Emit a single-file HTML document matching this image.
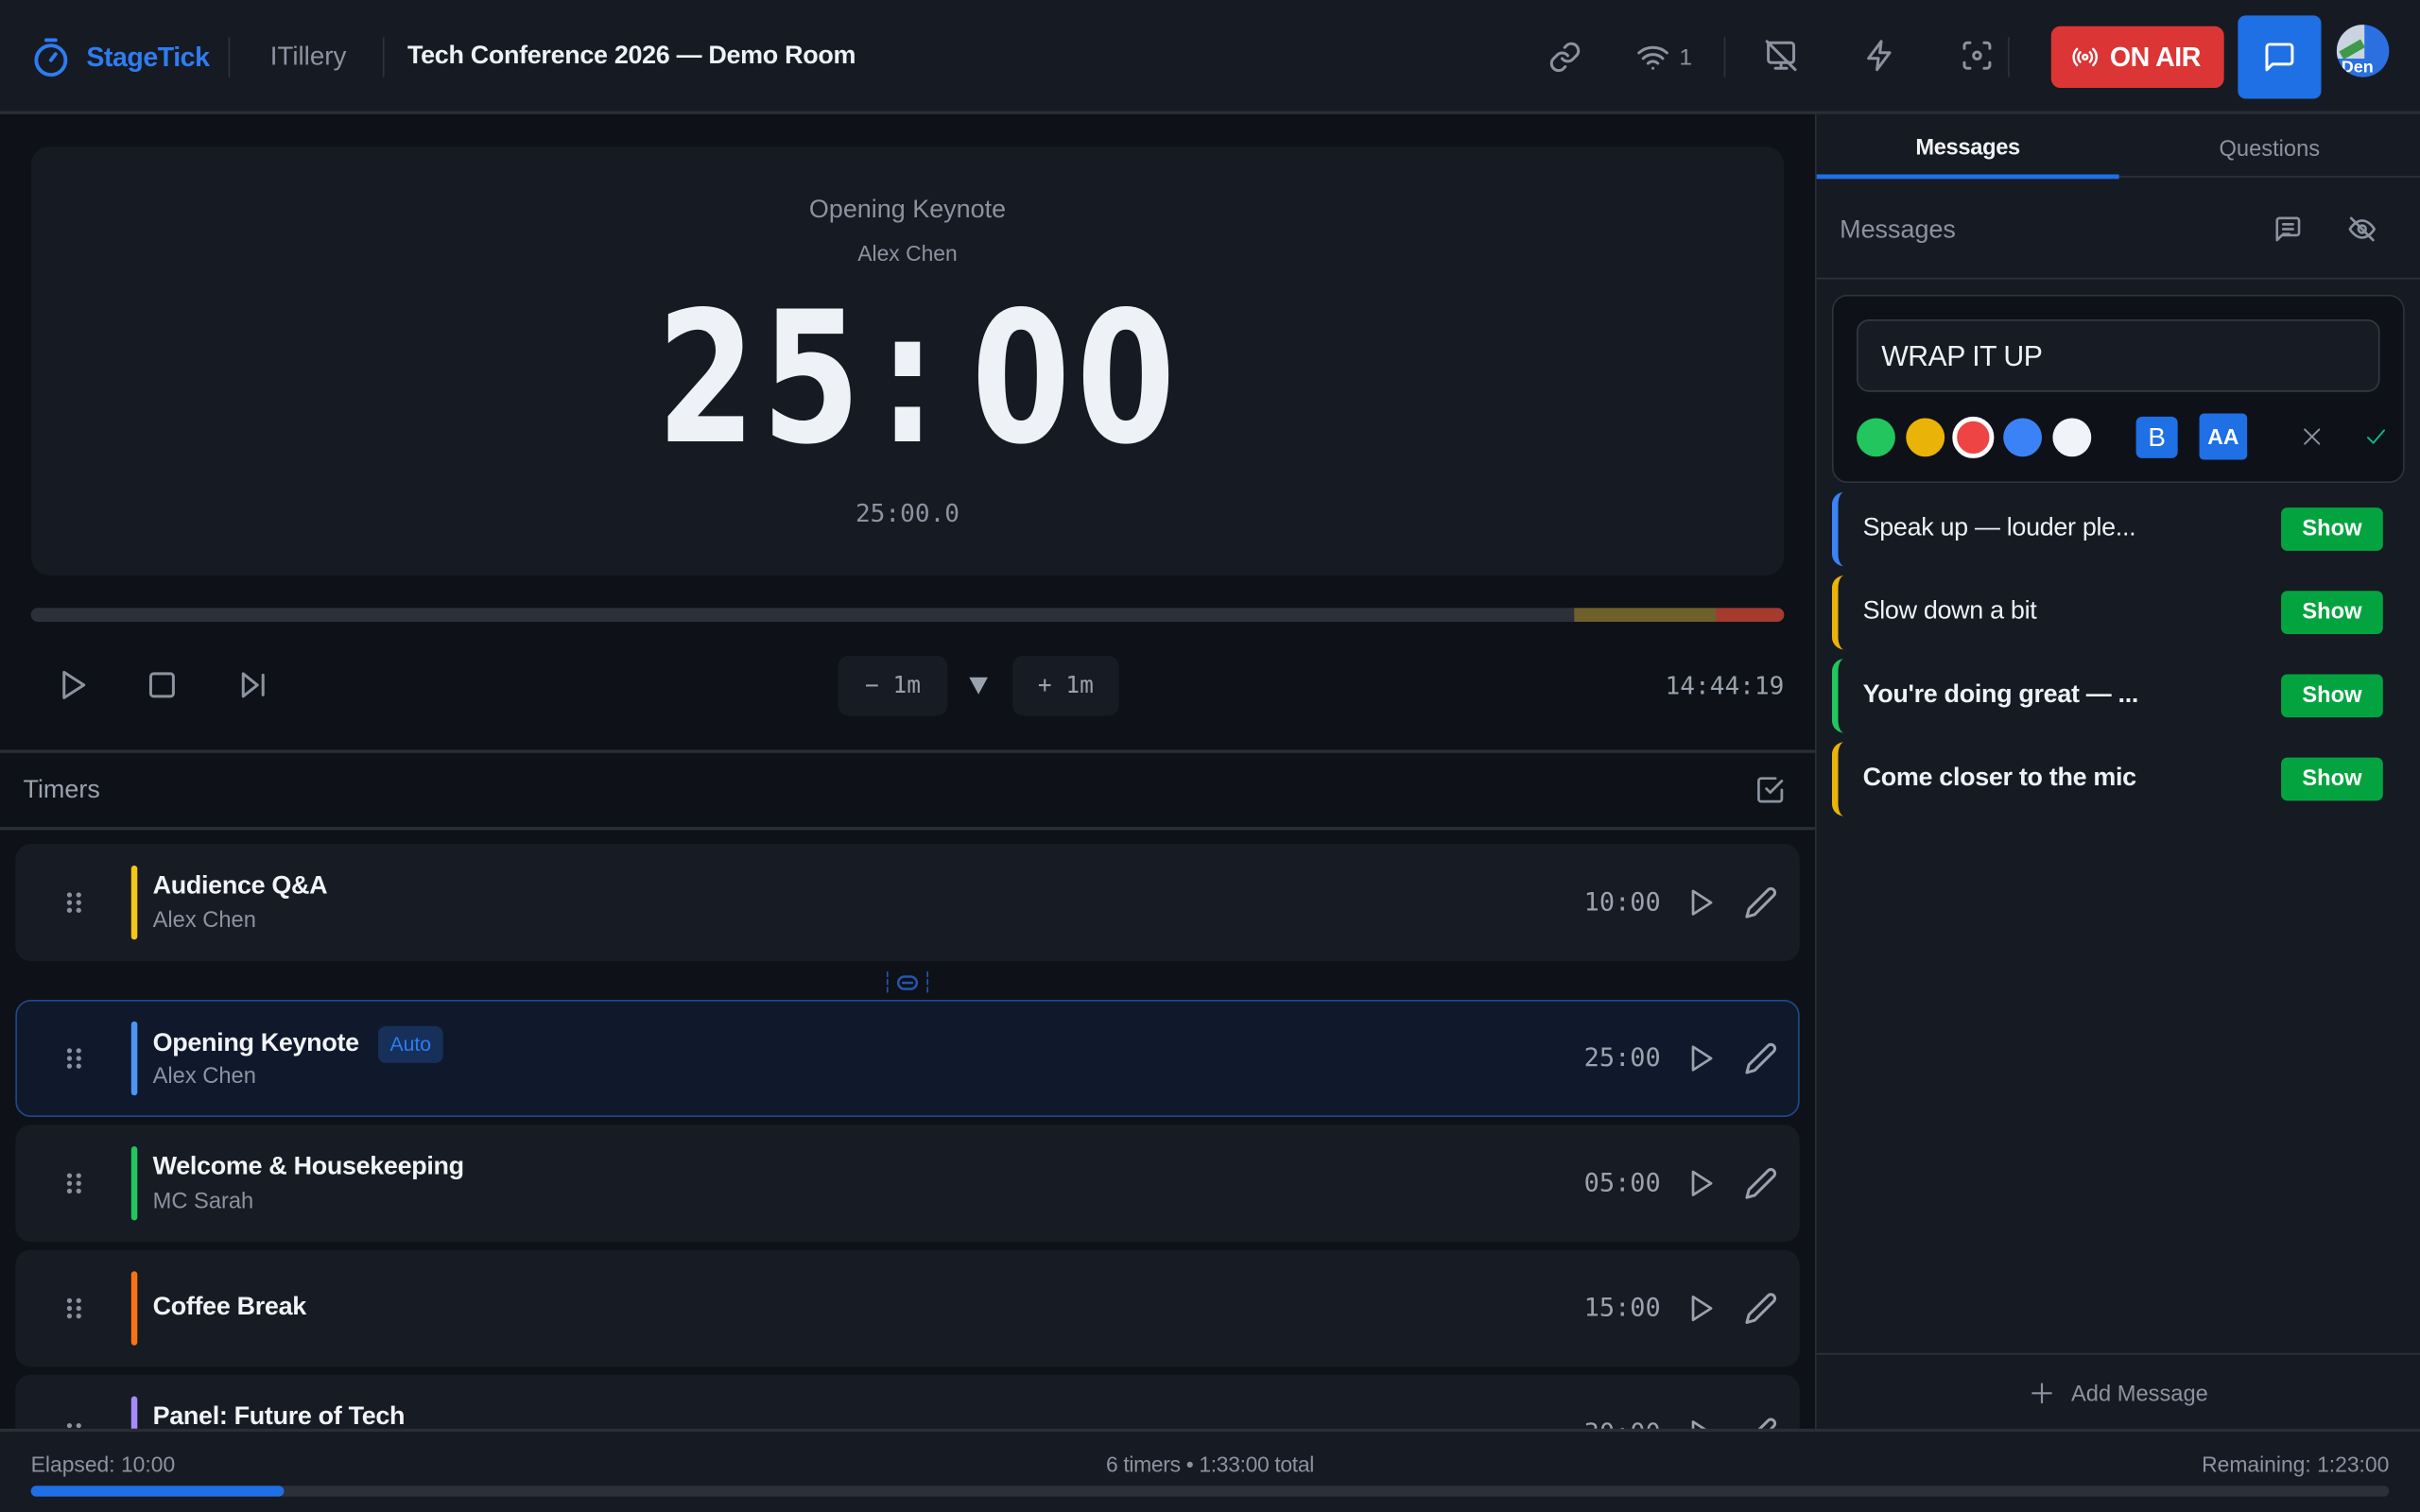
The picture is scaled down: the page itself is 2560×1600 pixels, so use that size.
<!DOCTYPE html>
<html><head><meta charset="utf-8"><style>
*{box-sizing:border-box;margin:0;padding:0}
html,body{width:2560px;height:1600px;overflow:hidden;background:#0e1117}
#w{position:absolute;left:0;top:0;width:1568px;height:980px;transform:scale(1.632653);transform-origin:0 0;font-family:"Liberation Sans",sans-serif;color:#e6e9ef;background:#0e1117}
.a{position:absolute}
svg{fill:none;stroke:currentColor;stroke-width:2;stroke-linecap:round;stroke-linejoin:round}
.mono{font-family:"DejaVu Sans Mono","Liberation Mono",monospace}
.big span{display:inline-block;width:68px;text-align:center;transform:scaleX(0.78)}
.row{position:absolute;left:10px;width:1156px;height:76px;background:#171b23;border-radius:10px}
.row .bar{position:absolute;left:75px;top:14px;width:4px;height:48px;border-radius:2px}
.row .t{position:absolute;left:89px;top:18px;font-size:16.5px;font-weight:bold;color:#f1f3f6;letter-spacing:-0.2px}
.row .s{position:absolute;left:89px;top:42px;font-size:14.5px;color:#8b93a0}
.row .tm{position:absolute;right:90px;top:28px;font-size:16.5px;color:#9aa2ae}
.row .pl{position:absolute;right:54px;top:28px;color:#9aa2ae}
.row .ed{position:absolute;right:14px;top:27px;color:#9aa2ae}
.row .dr{position:absolute;left:32px;top:30px;color:#8b93a0}
.msg{position:absolute;left:1187px;width:370px;height:48px;border-left:4px solid;border-radius:8px 0 0 8px}
.msg .x{position:absolute;left:16px;top:14px;font-size:16.5px;color:#eef1f5;letter-spacing:-0.2px}
.msg .b{position:absolute;right:13px;top:10px;width:66px;height:28px;background:#03a43f;border-radius:4px;color:#fff;font-weight:bold;font-size:14.5px;text-align:center;line-height:28px}
.ic{position:absolute;color:#8b93a0}
</style></head><body><div id="w">
<!-- header -->
<div class="a" style="left:0;top:0;width:1568px;height:74px;background:#161a22;border-bottom:2px solid #2a2e36"></div>
<svg class="a" style="left:21px;top:24px;color:#2f7cf0" width="24" height="26" viewBox="0 0 24 26"><circle cx="12" cy="15" r="9.5" stroke-width="2.4"/><path d="M9 2h6M12 15l3-4" stroke-width="2.4"/></svg>
<div class="a" style="left:56px;top:27px;font-size:17.5px;font-weight:bold;color:#2f7cf0;letter-spacing:-0.3px">StageTick</div>
<div class="a" style="left:148px;top:24px;width:1px;height:26px;background:#2e333c"></div>
<div class="a" style="left:175px;top:27px;font-size:17px;color:#8b93a0">ITillery</div>
<div class="a" style="left:248px;top:24px;width:1px;height:26px;background:#2e333c"></div>
<div class="a" style="left:264px;top:27px;font-size:16.5px;font-weight:bold;color:#eef1f5;letter-spacing:-0.2px">Tech Conference 2026 — Demo Room</div>
<svg class="ic" style="left:1003px;top:26px" width="22" height="22" viewBox="0 0 24 24"><path d="M10 13a5 5 0 0 0 7.5.5l3-3a5 5 0 0 0-7-7l-1.7 1.7"/><path d="M14 11a5 5 0 0 0-7.5-.5l-3 3a5 5 0 0 0 7 7l1.7-1.7"/></svg>
<svg class="ic" style="left:1060px;top:27px" width="22" height="20" viewBox="0 0 24 22"><path d="M2 8a15 15 0 0 1 20 0M5 12a10 10 0 0 1 14 0M8.5 15.5a5 5 0 0 1 7 0M12 19h.01"/></svg>
<div class="a" style="left:1088px;top:29px;font-size:15px;color:#8b93a0">1</div>
<div class="a" style="left:1117px;top:24px;width:1px;height:26px;background:#2e333c"></div>
<svg class="ic" style="left:1143px;top:25px" width="22" height="22" viewBox="0 0 24 24"><path d="M3 3h16a2 2 0 0 1 2 2v10a2 2 0 0 1-2 2H5a2 2 0 0 1-2-2V3zM8 21h8M12 17v4M2 2l20 20"/></svg>
<svg class="ic" style="left:1207px;top:25px" width="22" height="22" viewBox="0 0 24 24"><path d="M13 2L4 14h7l-1 8 9-12h-7l1-8z"/></svg>
<svg class="ic" style="left:1270px;top:25px" width="22" height="22" viewBox="0 0 24 24"><path d="M3 7V5a2 2 0 0 1 2-2h2M17 3h2a2 2 0 0 1 2 2v2M21 17v2a2 2 0 0 1-2 2h-2M7 21H5a2 2 0 0 1-2-2v-2"/><circle cx="12" cy="12" r="2.5"/></svg>
<div class="a" style="left:1301px;top:24px;width:1px;height:26px;background:#2e333c"></div>
<div class="a" style="left:1329px;top:17px;width:112px;height:40px;background:#dc3535;border-radius:6px"></div>
<svg class="a" style="left:1342px;top:28px;color:#fff" width="18" height="18" viewBox="0 0 24 24"><circle cx="12" cy="12" r="2"/><path d="M16.2 7.8a6 6 0 0 1 0 8.4M7.8 16.2a6 6 0 0 1 0-8.4M19 5a10 10 0 0 1 0 14M5 19A10 10 0 0 1 5 5"/></svg>
<div class="a" style="left:1367px;top:27px;font-size:17.5px;font-weight:bold;color:#fff;letter-spacing:-0.3px">ON AIR</div>
<div class="a" style="left:1450px;top:10px;width:54px;height:54px;background:#1f6fe5;border-radius:5px"></div>
<svg class="a" style="left:1466px;top:26px;color:#fff" width="22" height="22" viewBox="0 0 24 24"><path d="M21 15a2 2 0 0 1-2 2H7l-4 4V5a2 2 0 0 1 2-2h14a2 2 0 0 1 2 2z"/></svg>
<div class="a" style="left:1514px;top:16px;width:34px;height:34px;border-radius:50%;background:#2b6fe0;overflow:hidden"><div class="a" style="left:0;top:0;width:18px;height:22px;background:#c9d4e0"></div><div class="a" style="left:2px;top:13px;width:16px;height:6px;background:#3d9a4a;transform:rotate(-30deg)"></div><div class="a" style="left:3px;top:22px;font-size:11px;font-weight:bold;color:#fff">Den</div></div>
<!-- timer display -->
<div class="a" style="left:20px;top:95px;width:1136px;height:278px;background:#161a22;border-radius:12px"></div>
<div class="a" style="left:20px;top:127px;width:1136px;text-align:center;font-size:16.5px;color:#8b93a0">Opening Keynote</div>
<div class="a" style="left:20px;top:156px;width:1136px;text-align:center;font-size:14px;color:#8b93a0">Alex Chen</div>
<div class="a big" style="left:20px;top:180px;width:1136px;text-align:center;font-family:'DejaVu Sans',sans-serif;font-size:118px;font-weight:bold;color:#eef1f5;line-height:130px;white-space:nowrap"><span>2</span><span>5</span><span>:</span><span>0</span><span>0</span></div>
<div class="a mono" style="left:20px;top:323px;width:1136px;text-align:center;font-size:16px;color:#8b93a0">25:00.0</div>
<div class="a" style="left:20px;top:394px;width:1136px;height:9px;border-radius:5px;background:#2c3139;overflow:hidden"><div class="a" style="left:1000px;top:0;width:92px;height:9px;background:#6f5f2a"></div><div class="a" style="left:1092px;top:0;width:44px;height:9px;background:#a63a2e"></div></div>
<svg class="ic" style="left:36px;top:433px" width="22" height="22" viewBox="0 0 24 24"><path d="M6 3l14 9-14 9z"/></svg>
<svg class="ic" style="left:94px;top:433px" width="22" height="22" viewBox="0 0 24 24"><rect x="4" y="4" width="16" height="16" rx="2"/></svg>
<svg class="ic" style="left:153px;top:433px" width="22" height="22" viewBox="0 0 24 24"><path d="M5 4l10 8-10 8zM19 5v14"/></svg>
<div class="a mono" style="left:543px;top:425px;width:71px;height:39px;background:#171b23;border-radius:7px;text-align:center;line-height:39px;font-size:15px;color:#9aa2ae">− 1m</div>
<div class="a" style="left:628px;top:439px;width:0;height:0;border-left:6px solid transparent;border-right:6px solid transparent;border-top:11px solid #9aa2ae"></div>
<div class="a mono" style="left:656px;top:425px;width:69px;height:39px;background:#171b23;border-radius:7px;text-align:center;line-height:39px;font-size:15px;color:#9aa2ae">+ 1m</div>
<div class="a mono" style="left:1060px;top:435px;width:96px;text-align:right;font-size:16px;color:#9aa2ae">14:44:19</div>
<div class="a" style="left:0;top:486px;width:1176px;height:2px;background:#2a2e36"></div>
<div class="a" style="left:15px;top:503px;font-size:16.5px;color:#9aa2ae">Timers</div>
<svg class="ic" style="left:1137px;top:502px" width="20" height="20" viewBox="0 0 24 24"><path d="M9 11l3 3 9-9M21 12v7a2 2 0 0 1-2 2H5a2 2 0 0 1-2-2V5a2 2 0 0 1 2-2h11"/></svg>
<div class="a" style="left:0;top:536px;width:1176px;height:2px;background:#2a2e36"></div>
<!-- rows -->
<div class="row" style="top:547px"><svg class="dr" width="12" height="16" viewBox="0 0 12 16" style="fill:#8b93a0;stroke:none"><circle cx="3" cy="3" r="1.6"/><circle cx="9" cy="3" r="1.6"/><circle cx="3" cy="8" r="1.6"/><circle cx="9" cy="8" r="1.6"/><circle cx="3" cy="13" r="1.6"/><circle cx="9" cy="13" r="1.6"/></svg><div class="bar" style="background:#f5c518"></div><div class="t">Audience Q&amp;A</div><div class="s">Alex Chen</div><div class="tm mono">10:00</div><svg class="pl" width="20" height="20" viewBox="0 0 24 24"><path d="M6 3l14 9-14 9z"/></svg><svg class="ed" width="22" height="22" viewBox="0 0 24 24"><path d="M17 3a2.8 2.8 0 1 1 4 4L7.5 20.5 2 22l1.5-5.5z"/></svg></div>
<svg class="a" style="left:574px;top:629px;color:#2357b0" width="28" height="16" viewBox="0 0 28 16"><path d="M1 1v14M27 1v14" stroke-dasharray="3 2" stroke-width="1"/><rect x="8" y="4" width="12" height="8" rx="4" stroke-width="1.5"/><path d="M11 8h6" stroke-width="1.5"/></svg>
<div class="row" style="top:648px;height:76px;background:#0f192b;border:1px solid #1f4a8a"><svg class="dr" style="left:31px;top:29px" width="12" height="16" viewBox="0 0 12 16"><circle cx="3" cy="3" r="1.6" fill="#8b93a0" stroke="none"/><circle cx="9" cy="3" r="1.6" fill="#8b93a0" stroke="none"/><circle cx="3" cy="8" r="1.6" fill="#8b93a0" stroke="none"/><circle cx="9" cy="8" r="1.6" fill="#8b93a0" stroke="none"/><circle cx="3" cy="13" r="1.6" fill="#8b93a0" stroke="none"/><circle cx="9" cy="13" r="1.6" fill="#8b93a0" stroke="none"/></svg><div class="bar" style="left:74px;top:13px;background:#4d94f5"></div><div class="t" style="left:88px;top:18px">Opening Keynote</div><div class="a" style="left:234px;top:16px;width:42px;height:24px;background:#16305a;border-radius:5px;color:#2f7cf0;font-size:13px;text-align:center;line-height:24px">Auto</div><div class="s" style="left:88px;top:41px">Alex Chen</div><div class="tm mono" style="right:89px;top:27px">25:00</div><svg class="pl" style="right:53px;top:27px" width="20" height="20" viewBox="0 0 24 24"><path d="M6 3l14 9-14 9z"/></svg><svg class="ed" style="right:13px;top:26px" width="22" height="22" viewBox="0 0 24 24"><path d="M17 3a2.8 2.8 0 1 1 4 4L7.5 20.5 2 22l1.5-5.5z"/></svg></div>
<div class="row" style="top:729px"><svg class="dr" width="12" height="16" viewBox="0 0 12 16" style="fill:#8b93a0;stroke:none"><circle cx="3" cy="3" r="1.6"/><circle cx="9" cy="3" r="1.6"/><circle cx="3" cy="8" r="1.6"/><circle cx="9" cy="8" r="1.6"/><circle cx="3" cy="13" r="1.6"/><circle cx="9" cy="13" r="1.6"/></svg><div class="bar" style="background:#22c55e"></div><div class="t">Welcome &amp; Housekeeping</div><div class="s">MC Sarah</div><div class="tm mono">05:00</div><svg class="pl" width="20" height="20" viewBox="0 0 24 24"><path d="M6 3l14 9-14 9z"/></svg><svg class="ed" width="22" height="22" viewBox="0 0 24 24"><path d="M17 3a2.8 2.8 0 1 1 4 4L7.5 20.5 2 22l1.5-5.5z"/></svg></div>
<div class="row" style="top:810px"><svg class="dr" width="12" height="16" viewBox="0 0 12 16" style="fill:#8b93a0;stroke:none"><circle cx="3" cy="3" r="1.6"/><circle cx="9" cy="3" r="1.6"/><circle cx="3" cy="8" r="1.6"/><circle cx="9" cy="8" r="1.6"/><circle cx="3" cy="13" r="1.6"/><circle cx="9" cy="13" r="1.6"/></svg><div class="bar" style="background:#f97316"></div><div class="t" style="top:28px">Coffee Break</div><div class="tm mono">15:00</div><svg class="pl" width="20" height="20" viewBox="0 0 24 24"><path d="M6 3l14 9-14 9z"/></svg><svg class="ed" width="22" height="22" viewBox="0 0 24 24"><path d="M17 3a2.8 2.8 0 1 1 4 4L7.5 20.5 2 22l1.5-5.5z"/></svg></div>
<div class="row" style="top:891px"><svg class="dr" width="12" height="16" viewBox="0 0 12 16" style="fill:#8b93a0;stroke:none"><circle cx="3" cy="3" r="1.6"/><circle cx="9" cy="3" r="1.6"/><circle cx="3" cy="8" r="1.6"/><circle cx="9" cy="8" r="1.6"/><circle cx="3" cy="13" r="1.6"/><circle cx="9" cy="13" r="1.6"/></svg><div class="bar" style="background:#a78bfa"></div><div class="t">Panel: Future of Tech</div><div class="tm mono">30:00</div><svg class="pl" width="20" height="20" viewBox="0 0 24 24"><path d="M6 3l14 9-14 9z"/></svg><svg class="ed" width="22" height="22" viewBox="0 0 24 24"><path d="M17 3a2.8 2.8 0 1 1 4 4L7.5 20.5 2 22l1.5-5.5z"/></svg></div>
<!-- right panel -->
<div class="a" style="left:1176px;top:74px;width:392px;height:854px;background:#161a22;border-left:1px solid #2a2e36"></div>
<div class="a" style="left:1177px;top:88px;width:196px;text-align:center;font-size:14.5px;font-weight:bold;color:#f1f3f6;letter-spacing:-0.2px">Messages</div>
<div class="a" style="left:1373px;top:89px;width:195px;text-align:center;font-size:14.5px;color:#8b93a0">Questions</div>
<div class="a" style="left:1177px;top:114px;width:391px;height:1px;background:#2e333c"></div>
<div class="a" style="left:1177px;top:113px;width:196px;height:3px;background:#1f6fe5"></div>
<div class="a" style="left:1192px;top:140px;font-size:16.5px;color:#8b93a0">Messages</div>
<svg class="ic" style="left:1473px;top:139px" width="19" height="19" viewBox="0 0 24 24"><path d="M21 15a2 2 0 0 1-2 2H7l-4 4V5a2 2 0 0 1 2-2h14a2 2 0 0 1 2 2zM8 8h8M8 12h8M8 16h5"/></svg>
<svg class="ic" style="left:1521px;top:139px" width="19" height="19" viewBox="0 0 24 24"><path d="M2 12s4-7 10-7 10 7 10 7-4 7-10 7S2 12 2 12z"/><circle cx="12" cy="12" r="3"/><path d="M3 3l18 18"/></svg>
<div class="a" style="left:1177px;top:180px;width:391px;height:1px;background:#2e333c"></div>
<div class="a" style="left:1187px;top:191px;width:371px;height:122px;background:#0e1117;border:1px solid #2e333c;border-radius:10px"></div>
<div class="a" style="left:1203px;top:207px;width:339px;height:47px;background:#171b23;border:1px solid #343944;border-radius:8px;font-size:18.5px;color:#eef1f5;padding:12px 15px;letter-spacing:-0.3px">WRAP IT UP</div>
<div class="a" style="left:1203px;top:271px;width:25px;height:25px;border-radius:50%;background:#22c55e"></div>
<div class="a" style="left:1235px;top:271px;width:25px;height:25px;border-radius:50%;background:#eab308"></div>
<div class="a" style="left:1265px;top:270px;width:27px;height:27px;border-radius:50%;background:#ef4444;border:3px solid #fff"></div>
<div class="a" style="left:1298px;top:271px;width:25px;height:25px;border-radius:50%;background:#3b82f6"></div>
<div class="a" style="left:1330px;top:271px;width:25px;height:25px;border-radius:50%;background:#f0f3f8"></div>
<div class="a" style="left:1384px;top:270px;width:27px;height:27px;border-radius:4px;background:#1f6fe5;color:#fff;font-size:17px;text-align:center;line-height:27px">B</div>
<div class="a" style="left:1425px;top:268px;width:31px;height:30px;border-radius:3px;background:#1f6fe5;color:#fff;font-size:14px;font-weight:bold;text-align:center;line-height:30px">AA</div>
<svg class="ic" style="left:1491px;top:276px" width="14" height="14" viewBox="0 0 24 24"><path d="M4 4l16 16M20 4L4 20"/></svg>
<svg class="a" style="left:1532px;top:276px;color:#10b981" width="15" height="14" viewBox="0 0 24 24"><path d="M3 13l6 6L21 5"/></svg>
<div class="msg" style="top:319px;border-color:#3b82f6"><div class="x">Speak up — louder ple...</div><div class="b">Show</div></div>
<div class="msg" style="top:373px;border-color:#eab308"><div class="x">Slow down a bit</div><div class="b">Show</div></div>
<div class="msg" style="top:427px;border-color:#22c55e"><div class="x" style="font-weight:bold">You're doing great — ...</div><div class="b">Show</div></div>
<div class="msg" style="top:481px;border-color:#eab308"><div class="x" style="font-weight:bold">Come closer to the mic</div><div class="b">Show</div></div>
<div class="a" style="left:1177px;top:877px;width:391px;height:1px;background:#2e333c"></div>
<svg class="ic" style="left:1315px;top:895px" width="16" height="16" viewBox="0 0 24 24"><path d="M12 3v18M3 12h18"/></svg>
<div class="a" style="left:1342px;top:896px;font-size:14.5px;color:#8b93a0">Add Message</div>
<!-- footer -->
<div class="a" style="left:0;top:926px;width:1568px;height:54px;background:#161a22;border-top:2px solid #2a2e36"></div>
<div class="a" style="left:20px;top:941px;font-size:14px;color:#8b93a0">Elapsed: 10:00</div>
<div class="a" style="left:0;top:941px;width:1568px;text-align:center;font-size:14px;color:#8b93a0;letter-spacing:-0.2px">6 timers • 1:33:00 total</div>
<div class="a" style="right:20px;top:941px;font-size:14px;color:#8b93a0">Remaining: 1:23:00</div>
<div class="a" style="left:20px;top:963px;width:1528px;height:7px;border-radius:4px;background:#2c3139"><div class="a" style="left:0;top:0;width:164px;height:7px;border-radius:4px;background:#1f6fe5"></div></div>
</div></body></html>
